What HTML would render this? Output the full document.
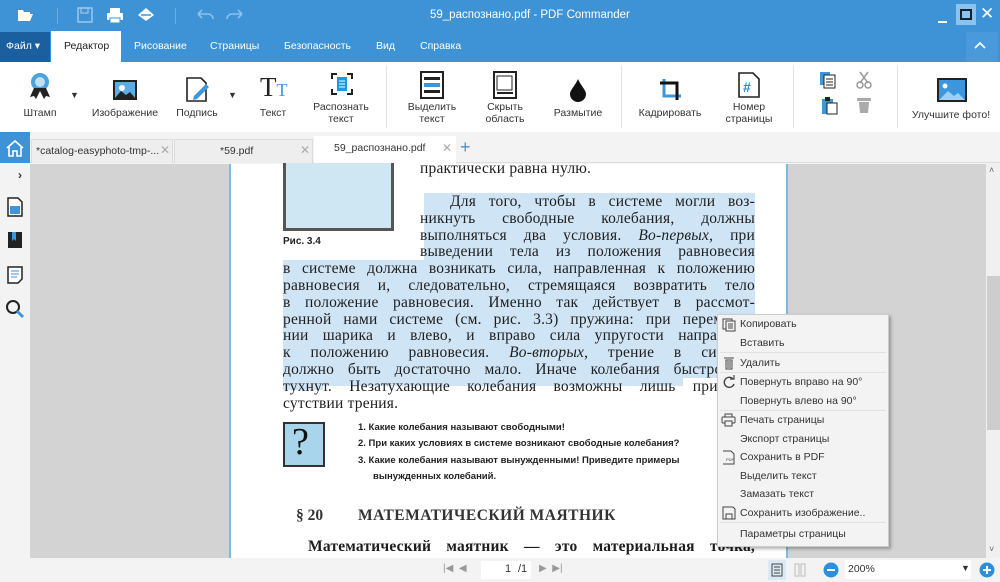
<!DOCTYPE html>
<html><head><meta charset="utf-8"><style>
*{margin:0;padding:0;box-sizing:border-box}
body{width:1000px;height:582px;overflow:hidden;position:relative;font-family:"Liberation Sans","DejaVu Sans",sans-serif;background:#f3f3f3}
.a{position:absolute}
.t{position:absolute;font-size:11px;color:#333;white-space:nowrap}
.lbl{position:absolute;font-size:10.5px;color:#333;text-align:center;line-height:12px;white-space:nowrap;transform:translateX(-50%)}
.sep{position:absolute;top:66px;width:1px;height:62px;background:#e3e3e3}
.pl{position:absolute;font-family:"Liberation Serif",serif;font-size:15.5px;line-height:17px;color:#1e1e1e;white-space:nowrap;text-align:justify;text-align-last:justify;letter-spacing:0.2px}
.hl{background:#cfe4f5}
.mi{position:absolute;left:740px;font-size:10.5px;color:#333}
.ms{position:absolute;left:720px;width:166px;height:1px;background:#e2e2e2}
.q{position:absolute;left:358px;font-size:9.5px;font-weight:bold;color:#222;white-space:nowrap}
</style></head><body>
<!-- title bar -->
<div class="a" style="left:0;top:0;width:1000px;height:62px;background:#3d93d6"></div>
<svg class="a" style="left:16px;top:6px" width="18" height="18" viewBox="0 0 18 18"><path d="M2 4h5l1 2h6v2H5l-3 7z" fill="#fff"/><path d="M5 8h12l-3 7H2z" fill="#fff"/></svg>
<div class="a" style="left:57px;top:8px;width:1px;height:16px;background:#6aaee2"></div>
<svg class="a" style="left:76px;top:6px" width="18" height="18"><rect x="2" y="2" width="14" height="14" fill="none" stroke="#9cc8ec" stroke-width="1.5"/><rect x="5" y="2" width="7" height="5" fill="none" stroke="#9cc8ec" stroke-width="1.2"/></svg>
<svg class="a" style="left:106px;top:6px" width="18" height="18"><rect x="4" y="2" width="10" height="5" fill="#fff"/><rect x="1" y="7" width="16" height="7" rx="1" fill="#fff"/><rect x="4" y="12" width="10" height="5" fill="#fff" stroke="#3d93d6"/></svg>
<svg class="a" style="left:136px;top:5px" width="20" height="18"><path d="M2 10l8-7 8 7-8 6z" fill="#fff"/><path d="M5 10h10" stroke="#3d93d6" stroke-width="1.5"/></svg>
<div class="a" style="left:175px;top:8px;width:1px;height:16px;background:#6aaee2"></div>
<svg class="a" style="left:195px;top:7px" width="20" height="14"><path d="M3 7h10a5 5 0 0 1 5 5M3 7l4-4M3 7l4 4" fill="none" stroke="#8ec0ea" stroke-width="1.6"/></svg>
<svg class="a" style="left:225px;top:7px" width="20" height="14"><path d="M17 7H7a5 5 0 0 0-5 5M17 7l-4-4M17 7l-4 4" fill="none" stroke="#8ec0ea" stroke-width="1.6"/></svg>
<div class="t" style="left:430px;top:9px;color:#fff;font-size:11.5px">59_распознано.pdf - PDF Commander</div>
<div class="a" style="left:938px;top:21px;width:9px;height:2px;background:#fff"></div>
<div class="a" style="left:956px;top:4px;width:20px;height:21px;background:#8cc2ec"></div>
<div class="a" style="left:960px;top:9px;width:12px;height:11px;border:2px solid #123"></div>
<div class="t" style="left:980px;top:4px;color:#fff;font-size:17px">✕</div>
<!-- menu -->
<div class="a" style="left:0;top:32px;width:50px;height:30px;background:#1c5f9e"></div>
<div class="t" style="left:6px;top:40px;color:#fff;font-size:10.5px">Файл ▾</div>
<div class="a" style="left:51px;top:31px;width:70px;height:31px;background:#fff"></div>
<div class="t" style="left:64px;top:40px;color:#222;font-size:10.5px">Редактор</div>
<div class="t" style="left:134px;top:40px;color:#fff;font-size:10.5px">Рисование</div>
<div class="t" style="left:210px;top:40px;color:#fff;font-size:10.5px">Страницы</div>
<div class="t" style="left:284px;top:40px;color:#fff;font-size:10.5px">Безопасность</div>
<div class="t" style="left:376px;top:40px;color:#fff;font-size:10.5px">Вид</div>
<div class="t" style="left:420px;top:40px;color:#fff;font-size:10.5px">Справка</div>
<div class="a" style="left:966px;top:32px;width:32px;height:30px;background:#4a9adb"></div>
<svg class="a" style="left:973px;top:40px" width="14" height="10"><path d="M2 8l5-5 5 5" fill="none" stroke="#fff" stroke-width="1.6"/></svg>
<!-- ribbon -->
<div class="a" style="left:0;top:62px;width:1000px;height:70px;background:#fff"></div>
<div class="sep" style="left:386px"></div><div class="sep" style="left:621px"></div><div class="sep" style="left:793px"></div><div class="sep" style="left:897px"></div>
<svg class="a" style="left:28px;top:72px" width="24" height="30"><circle cx="12" cy="10" r="9" fill="#4aa3df"/><circle cx="12" cy="10" r="5" fill="#bfe0f7"/><path d="M6 16l-4 9 4-1 2 3 4-8 4 8 2-3 4 1-4-9z" fill="#222"/></svg>
<div class="t" style="left:70px;top:90px;font-size:9px">▼</div>
<div class="lbl" style="left:40px;top:107px">Штамп</div>
<svg class="a" style="left:112px;top:79px" width="26" height="22"><rect x="1" y="1" width="24" height="20" fill="#222"/><rect x="3" y="3" width="20" height="16" fill="#5aaee6"/><circle cx="10" cy="9" r="3" fill="#fff"/><path d="M3 19l6-7 5 4 4-3 5 6z" fill="#222"/></svg>
<div class="lbl" style="left:125px;top:107px">Изображение</div>
<svg class="a" style="left:185px;top:76px" width="26" height="28"><path d="M2 2h14l5 5v18H2z" fill="#fff" stroke="#222" stroke-width="1.6"/><path d="M9 20l12-12 3 3-12 12-4 1z" fill="#3b96dc"/></svg>
<div class="t" style="left:228px;top:90px;font-size:9px">▼</div>
<div class="lbl" style="left:197px;top:107px">Подпись</div>
<div class="t" style="left:260px;top:72px;font-family:'Liberation Serif',serif;font-size:27px;color:#222">T<span style="font-size:18px;color:#3b96dc">T</span></div>
<div class="lbl" style="left:273px;top:107px">Текст</div>
<svg class="a" style="left:330px;top:72px" width="24" height="24"><path d="M2 7V2h5M17 2h5v5M22 17v5h-5M7 22H2v-5" fill="none" stroke="#222" stroke-width="2"/><rect x="7" y="5" width="10" height="14" fill="#1a9ae0"/><path d="M9 9h6M9 12h6M9 15h6" stroke="#fff"/></svg>
<div class="lbl" style="left:341px;top:101px">Распознать<br>текст</div>
<svg class="a" style="left:420px;top:71px" width="24" height="28"><rect x="1" y="1" width="22" height="26" fill="#fff" stroke="#222" stroke-width="2"/><rect x="4" y="6" width="16" height="3" fill="#222"/><rect x="4" y="12" width="16" height="4" fill="#3b96dc"/><rect x="4" y="19" width="16" height="3" fill="#222"/></svg>
<div class="lbl" style="left:432px;top:101px">Выделить<br>текст</div>
<svg class="a" style="left:493px;top:71px" width="24" height="28"><rect x="1" y="1" width="22" height="26" fill="#fff" stroke="#222" stroke-width="2"/><rect x="4" y="5" width="15" height="14" fill="none" stroke="#222"/><path d="M4 22h16" stroke="#222" stroke-width="2"/></svg>
<div class="lbl" style="left:505px;top:101px">Скрыть<br>область</div>
<svg class="a" style="left:568px;top:78px" width="20" height="24"><path d="M10 1C7 8 2 12 2 16a8 8 0 0 0 16 0c0-4-5-8-8-15z" fill="#111"/></svg>
<div class="lbl" style="left:578px;top:107px">Размытие</div>
<svg class="a" style="left:658px;top:77px" width="26" height="26"><path d="M6 2v17h17" fill="none" stroke="#3b96dc" stroke-width="3"/><path d="M2 6h17v17" fill="none" stroke="#111" stroke-width="3"/></svg>
<div class="lbl" style="left:670px;top:107px">Кадрировать</div>
<svg class="a" style="left:738px;top:72px" width="22" height="26"><path d="M1 1h14l6 6v18H1z" fill="#fff" stroke="#222" stroke-width="1.6"/><text x="5" y="20" font-family="Liberation Sans" font-weight="bold" font-size="14" fill="#2a8bd8">#</text></svg>
<div class="lbl" style="left:749px;top:101px">Номер<br>страницы</div>
<svg class="a" style="left:818px;top:70px" width="20" height="20"><rect x="2" y="2" width="10" height="13" fill="#3b96dc"/><rect x="6" y="5" width="11" height="13" fill="#fff" stroke="#222"/><path d="M8 9h7M8 12h7M8 15h7" stroke="#222"/></svg>
<svg class="a" style="left:820px;top:96px" width="20" height="20"><rect x="2" y="3" width="11" height="15" fill="#3b96dc"/><rect x="5" y="1" width="5" height="4" fill="#222"/><rect x="7" y="7" width="10" height="11" fill="#fff" stroke="#222"/></svg>
<svg class="a" style="left:855px;top:70px" width="18" height="20"><path d="M5 2l8 11M13 2L5 13" stroke="#999" stroke-width="1.5"/><circle cx="5" cy="15" r="3" fill="none" stroke="#999" stroke-width="1.5"/><circle cx="13" cy="15" r="3" fill="none" stroke="#999" stroke-width="1.5"/></svg>
<svg class="a" style="left:856px;top:96px" width="16" height="18"><path d="M1 2h14v3H1zM3 6h10l-1 11H4z" fill="#aaa"/></svg>
<svg class="a" style="left:936px;top:77px" width="32" height="26"><rect x="1" y="1" width="30" height="24" fill="#222"/><rect x="3" y="3" width="26" height="20" fill="#3b96dc"/><circle cx="9" cy="9" r="2.5" fill="#fff"/><path d="M3 23l9-9 6 5 4-3 7 7z" fill="#9dd0f2"/></svg>
<div class="lbl" style="left:951px;top:109px">Улучшите фото!</div>
<!-- tab row -->
<div class="a" style="left:0;top:132px;width:1000px;height:31px;background:#f3f3f3;border-bottom:1px solid #ddd"></div>
<div class="a" style="left:0;top:132px;width:30px;height:32px;background:#3d93d6"></div>
<svg class="a" style="left:5px;top:139px" width="20" height="18"><path d="M2 9l8-7 8 7M4 8v9h4v-5h4v5h4V8" fill="none" stroke="#fff" stroke-width="1.6"/></svg>
<div class="a" style="left:31px;top:139px;width:142px;height:24px;background:#eee;border:1px solid #ddd;border-bottom:none"></div>
<div class="t" style="left:36px;top:145px;font-size:10.5px">*catalog-easyphoto-tmp-...</div><div class="t" style="left:160px;top:143px;color:#aaa;font-size:12px">✕</div>
<div class="a" style="left:174px;top:139px;width:139px;height:24px;background:#eee;border:1px solid #ddd;border-bottom:none"></div>
<div class="t" style="left:220px;top:145px;font-size:10.5px">*59.pdf</div><div class="t" style="left:300px;top:143px;color:#aaa;font-size:12px">✕</div>
<div class="a" style="left:314px;top:136px;width:142px;height:28px;background:#fff"></div>
<div class="t" style="left:334px;top:142px;font-size:10.5px">59_распознано.pdf</div><div class="t" style="left:442px;top:141px;color:#aaa;font-size:12px">✕</div>
<div class="t" style="left:460px;top:137px;color:#3b96dc;font-size:18px">+</div>
<!-- sidebar -->
<div class="a" style="left:0;top:163px;width:30px;height:395px;background:#f3f3f3"></div>
<div class="t" style="left:18px;top:168px;font-size:12px;font-weight:bold">›</div>
<svg class="a" style="left:7px;top:197px" width="16" height="20"><path d="M1 1h10l4 4v14H1z" fill="#fff" stroke="#222" stroke-width="1.5"/><rect x="3" y="9" width="10" height="8" fill="#3b96dc"/></svg>
<svg class="a" style="left:7px;top:231px" width="16" height="18"><rect x="1" y="1" width="14" height="16" fill="#222"/><path d="M5 1v9l2-2 2 2V1z" fill="#3b96dc"/></svg>
<svg class="a" style="left:7px;top:266px" width="16" height="18"><path d="M1 1h14v12l-4 4H1z" fill="#fff" stroke="#222" stroke-width="1.5"/><path d="M4 5h8M4 8h8M4 11h6" stroke="#3b96dc"/></svg>
<svg class="a" style="left:5px;top:299px" width="20" height="20"><circle cx="8" cy="8" r="6" fill="none" stroke="#222" stroke-width="2"/><path d="M12 12l6 6" stroke="#3b96dc" stroke-width="3"/></svg>
<!-- doc area -->
<div class="a" style="left:30px;top:164px;width:956px;height:394px;background:#d3d3d3"></div>
<div class="a" style="left:229px;top:164px;width:559px;height:394px;background:#fff;border-left:2px solid #7fb9dc;border-right:2px solid #7fb9dc"></div>
<div class="a" style="left:986px;top:164px;width:14px;height:394px;background:#f0f0f0"></div>
<div class="a" style="left:987px;top:276px;width:13px;height:154px;background:#cdcdcd"></div>
<div class="t" style="left:989px;top:165px;font-size:9px;color:#666">˄</div>
<div class="t" style="left:989px;top:544px;font-size:9px;color:#666">˅</div>
<!-- page content -->
<div class="a" style="left:283px;top:163px;width:111px;height:68px;background:#cfe6f3;border:3px solid #555;border-top:none"></div>
<div class="t" style="left:283px;top:236px;font-size:10px;font-weight:bold;color:#222">Рис. 3.4</div>
<div class="pl" style="left:420px;top:160px">практически равна нулю.</div>
<div class="a hl" style="left:424px;top:193px;width:331px;height:68px"></div>
<div class="a hl" style="left:283px;top:260px;width:472px;height:118px"></div>
<div class="a hl" style="left:283px;top:378px;width:400px;height:8px"></div>
<div class="a hl" style="left:283px;top:378px;width:40px;height:12px"></div>
<div class="pl" style="left:450px;top:193px;width:305px">Для того, чтобы в системе могли воз-</div>
<div class="pl" style="left:420px;top:210px;width:335px">никнуть свободные колебания, должны</div>
<div class="pl" style="left:420px;top:227px;width:335px">выполняться два условия. <i>Во-первых</i>, при</div>
<div class="pl" style="left:420px;top:243px;width:335px">выведении тела из положения равновесия</div>
<div class="pl" style="left:283px;top:260px;width:472px">в системе должна возникать сила, направленная к положению</div>
<div class="pl" style="left:283px;top:277px;width:472px">равновесия и, следовательно, стремящаяся возвратить тело</div>
<div class="pl" style="left:283px;top:294px;width:472px">в положение равновесия. Именно так действует в рассмот-</div>
<div class="pl" style="left:283px;top:311px;width:472px">ренной нами системе (см. рис. 3.3) пружина: при перемеще-</div>
<div class="pl" style="left:283px;top:327px;width:472px">нии шарика и влево, и вправо сила упругости направлена</div>
<div class="pl" style="left:283px;top:344px;width:472px">к положению равновесия. <i>Во-вторых</i>, трение в системе</div>
<div class="pl" style="left:283px;top:361px;width:472px">должно быть достаточно мало. Иначе колебания быстро за-</div>
<div class="pl" style="left:283px;top:378px;width:472px">тухнут. Незатухающие колебания возможны лишь при от-</div>
<div class="pl" style="left:283px;top:395px;text-align:left;text-align-last:left">сутствии трения.</div>
<div class="a" style="left:283px;top:422px;width:42px;height:45px;background:#a8d4ec;border:2px solid #333"></div>
<div class="t" style="left:292px;top:420px;font-family:'Liberation Serif',serif;font-size:38px;color:#111">?</div>
<div class="q" style="top:422px">1. Какие колебания называют свободными!</div>
<div class="q" style="top:438px">2. При каких условиях в системе возникают свободные колебания?</div>
<div class="q" style="top:455px">3. Какие колебания называют вынужденными! Приведите примеры</div>
<div class="q" style="top:471px;left:373px">вынужденных колебаний.</div>
<div class="t" style="left:296px;top:507px;font-family:'Liberation Serif',serif;font-size:15.5px;font-weight:bold;color:#333">§ 20</div>
<div class="t" style="left:358px;top:507px;font-family:'Liberation Serif',serif;font-size:15.5px;font-weight:bold;color:#333;letter-spacing:0.5px">МАТЕМАТИЧЕСКИЙ МАЯТНИК</div>
<div class="pl" style="left:308px;top:538px;width:447px;font-weight:bold">Математический маятник — это материальная точка,</div>
<!-- context menu -->
<div class="a" style="left:717px;top:314px;width:172px;height:233px;background:#f3f3f3;border:1px solid #ccc;box-shadow:2px 2px 3px rgba(0,0,0,.3)"></div>
<div class="ms" style="top:352px"></div><div class="ms" style="top:372px"></div><div class="ms" style="top:410px"></div><div class="ms" style="top:522px"></div>
<svg class="a" style="left:722px;top:318px" width="14" height="14"><rect x="1" y="1" width="9" height="10" fill="none" stroke="#444"/><rect x="4" y="3" width="9" height="10" fill="#f3f3f3" stroke="#444"/><path d="M6 6h5M6 8h5M6 10h5" stroke="#444"/></svg>
<div class="mi" style="top:318px">Копировать</div>
<div class="mi" style="top:337px">Вставить</div>
<svg class="a" style="left:723px;top:356px" width="12" height="14"><path d="M1 2h10M3 4h6v9H3z" fill="none" stroke="#444"/><path d="M5 5v7M7 5v7" stroke="#444"/></svg>
<div class="mi" style="top:357px">Удалить</div>
<svg class="a" style="left:722px;top:375px" width="14" height="14"><path d="M11 4A5 5 0 1 0 12 9" fill="none" stroke="#444" stroke-width="1.4"/><path d="M8 4h4V0" fill="none" stroke="#444" stroke-width="1.2"/></svg>
<div class="mi" style="top:376px">Повернуть вправо на 90°</div>
<div class="mi" style="top:395px">Повернуть влево на 90°</div>
<svg class="a" style="left:721px;top:413px" width="15" height="14"><rect x="4" y="1" width="7" height="3" fill="none" stroke="#444"/><rect x="1" y="4" width="13" height="6" rx="1" fill="none" stroke="#444"/><rect x="4" y="8" width="7" height="5" fill="#f3f3f3" stroke="#444"/></svg>
<div class="mi" style="top:414px">Печать страницы</div>
<div class="mi" style="top:433px">Экспорт страницы</div>
<svg class="a" style="left:722px;top:450px" width="14" height="15"><path d="M1 1h8l3 3v10H1" fill="none" stroke="#444"/><text x="4" y="11" font-size="4" font-family="Liberation Sans" fill="#444">PDF</text></svg>
<div class="mi" style="top:451px">Сохранить в PDF</div>
<div class="mi" style="top:470px">Выделить текст</div>
<div class="mi" style="top:488px">Замазать текст</div>
<svg class="a" style="left:722px;top:506px" width="14" height="14"><path d="M1 1h10l2 2v10H1z" fill="none" stroke="#444"/><rect x="4" y="8" width="6" height="5" fill="none" stroke="#444"/></svg>
<div class="mi" style="top:507px">Сохранить изображение..</div>
<div class="mi" style="top:528px">Параметры страницы</div>
<!-- bottom bar -->
<div class="t" style="left:443px;top:563px;font-size:10px;color:#999">|◀ &nbsp;◀</div>
<div class="a" style="left:481px;top:561px;width:50px;height:18px;background:#fff"></div>
<div class="t" style="left:505px;top:563px;font-size:11px">1</div>
<div class="t" style="left:518px;top:563px;font-size:11px">/1</div>
<div class="t" style="left:539px;top:563px;font-size:10px;color:#999">▶ &nbsp;▶|</div>
<div class="a" style="left:768px;top:560px;width:18px;height:20px;background:#dbe9f5"></div>
<svg class="a" style="left:771px;top:563px" width="12" height="14"><rect x="1" y="1" width="10" height="12" fill="none" stroke="#444"/><path d="M3 4h6M3 7h6M3 10h6" stroke="#444"/></svg>
<svg class="a" style="left:794px;top:563px" width="12" height="14"><path d="M1 1h4v12H1zM7 1h4v12H7z" fill="none" stroke="#bbb"/></svg>
<svg class="a" style="left:823px;top:562px" width="16" height="16"><circle cx="8" cy="8" r="7.5" fill="#2d8fdc"/><path d="M4 8h8" stroke="#fff" stroke-width="2"/></svg>
<div class="a" style="left:845px;top:560px;width:126px;height:19px;background:#fff"></div>
<div class="t" style="left:848px;top:563px;font-size:10.5px">200%</div>
<div class="t" style="left:961px;top:563px;font-size:9px">▼</div>
<svg class="a" style="left:979px;top:562px" width="16" height="16"><circle cx="8" cy="8" r="7.5" fill="#2d8fdc"/><path d="M4 8h8M8 4v8" stroke="#fff" stroke-width="2"/></svg>
</body></html>
